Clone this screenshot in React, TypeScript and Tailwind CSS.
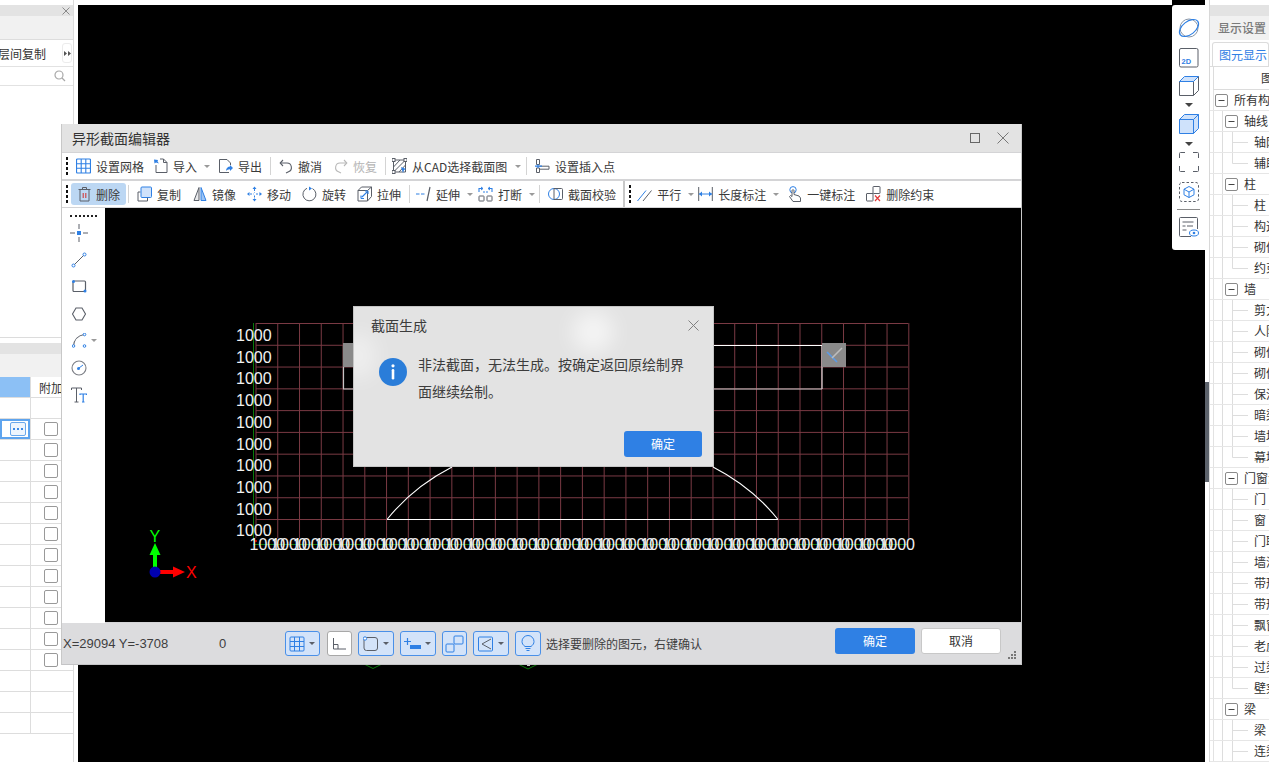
import React from "react";

const B = "#2f80e4";
const G = "#5a5f68";

function Grip({ className = "" }: { className?: string }) {
  return (
    <div className={`flex flex-col items-end gap-[2px] w-[3px] ${className}`}>
      {[0, 1, 2, 3].map((i) => (
        <div key={i} className="w-[2px] h-[3px] bg-[#111111]" />
      ))}
    </div>
  );
}

function Sep({ className = "" }: { className?: string }) {
  return <div className={`w-px h-[18px] bg-[#d4d4d4] shrink-0 ${className}`} />;
}

function Caret({ className = "" }: { className?: string }) {
  return <div className={`w-0 h-0 border-l-[3px] border-r-[3px] border-t-[3px] border-l-transparent border-r-transparent border-t-[#9a9a9a] shrink-0 ${className}`} />;
}

function Tool({ icon, label, className = "", muted = false, labelClass = "" }: { icon: React.ReactNode; label: string; className?: string; muted?: boolean; labelClass?: string }) {
  return (
    <div className={`flex items-center gap-[5px] shrink-0 ${className}`}>
      {icon}
      <span className={`mt-[2px] text-[12px] leading-[16px] whitespace-nowrap ${muted ? "text-[#b5b5b5]" : "text-[#3a3a3a]"} ${labelClass}`}>{label}</span>
    </div>
  );
}

function Ic({ w = 15, h = 16, children, className = "" }: { w?: number; h?: number; children: React.ReactNode; className?: string }) {
  return (
    <svg width={w} height={h} viewBox={`0 0 ${w} ${h}`} fill="none" strokeWidth="1" className={`shrink-0 ${className}`}>
      {children}
    </svg>
  );
}

const icons = {
  grid: (
    <Ic>
      <rect x="0.5" y="1" width="14" height="14" rx="1" stroke={B} strokeWidth="1.2" />
      <path d="M5.2 1v14M9.8 1v14M.5 5.7h14M.5 10.3h14" stroke={B} strokeWidth="1.1" />
    </Ic>
  ),
  imp: (
    <Ic>
      <path d="M3 7v7.5h11V4.5L10.5 1H7" stroke={G} />
      <path d="M10.5 1v3.5H14" stroke={G} />
      <path d="M1 1.5l4 0.5-.5 1.5 1.5 2-3-1-1.5 1z" fill={B} />
    </Ic>
  ),
  exp: (
    <Ic>
      <path d="M11 14.5H1.5v-13H9L12.5 5v2" stroke={G} />
      <path d="M8 13c0-3 2-4.500 4-4.500V7l3 3-3 3v-1.800c-2 0-3 .8-4 1.800z" fill={B} />
    </Ic>
  ),
  undo: (
    <Ic w={14}>
      <path d="M4 8 1.200 5 4 2" stroke={G} strokeWidth="1.1" />
      <path d="M1.500 5H8a4.500 4.500 0 0 1 1.500 8.700L7 15" stroke={G} strokeWidth="1.1" />
    </Ic>
  ),
  redo: (
    <Ic w={14}>
      <path d="M10 8l2.800-3L10 2" stroke="#b8b8b8" strokeWidth="1.1" />
      <path d="M12.500 5H6a4.500 4.500 0 0 0-1.500 8.700L7 15" stroke="#b8b8b8" strokeWidth="1.1" />
    </Ic>
  ),
  cad: (
    <Ic>
      <path d="M1.500 2h12v12h-12z" stroke={G} />
      <path d="M1.500 9 8 2M1.500 14 13.500 2M7 14l6.500-7" stroke={G} />
      <rect x="0" y="0.500" width="3" height="3" fill="#fff" stroke={G} />
      <rect x="12" y="0.500" width="3" height="3" fill="#fff" stroke={G} />
      <rect x="0" y="12.500" width="3" height="3" fill="#fff" stroke={G} />
      <path d="M9 9l5 2-2 1-1 3z" fill={B} />
    </Ic>
  ),
  insert: (
    <Ic>
      <path d="M1.500 1.500h3v5h-3zM1.500 10h3v4.500h-3zM4.500 8.200H14v3H4.500" stroke={G} />
      <path d="M0 8.200h7M3 6.500v3.400" stroke={B} strokeWidth="1.200" />
    </Ic>
  ),
  trash: (
    <Ic w={13}>
      <path d="M.5 3.500h12M4.500 3.500V1.500h4v2M2 3.500v11.500h9V3.500" stroke={G} />
      <path d="M5.200 7v5M7.800 7v5" stroke="#d23c3c" strokeWidth="1.100" />
    </Ic>
  ),
  copy: (
    <Ic>
      <path d="M3.500 6H1v9h9.500v-3" stroke={G} />
      <rect x="4" y="1" width="10.500" height="10.500" rx="1" fill="#cfe2fb" stroke={B} />
    </Ic>
  ),
  mirror: (
    <Ic w={14}>
      <path d="M6 1.500 1 14.500h5z" stroke={G} fill="#e9eaec" />
      <path d="M8 1.500l5 13H8z" fill="#9cc4f4" stroke={B} />
    </Ic>
  ),
  move: (
    <Ic>
      <path d="M7.500 3v3.500M7.500 9.500V13M3 8h3.500M9 8h3.500" stroke={B} strokeDasharray="2 1" />
      <path d="M7.500.5 5.500 3h4zM7.500 15.500l-2-2.500h4zM0 8l2.500-2v4zM15 8l-2.500-2v4z" fill={B} />
    </Ic>
  ),
  rotate: (
    <Ic>
      <path d="M10.500 2.600A6.500 6.500 0 1 1 5 2.300" stroke={G} />
      <path d="M7 0.500v4l3-2z" fill={B} />
    </Ic>
  ),
  stretch: (
    <Ic>
      <path d="M1 4.500h9.500V15H1zM1 4.500 4.500 1H14.500v9.500L10.500 15M10.500 4.500 14.500 1" stroke={G} />
      <path d="M5 11l5-5M4 12.500V9.500M4 12.500h3M11 5h-3M11 5v3" stroke={B} strokeWidth="1.100" />
    </Ic>
  ),
  extend: (
    <Ic>
      <path d="M0 8h3.500M5 8h3.500" stroke={B} strokeWidth="1.200" />
      <path d="M11 15 14 1" stroke={G} strokeWidth="1.200" />
    </Ic>
  ),
  brk: (
    <Ic>
      <rect x="1" y="10" width="5" height="5" stroke={G} rx="0.500" />
      <rect x="9" y="10" width="5" height="5" stroke={G} rx="0.500" />
      <path d="M1 6V2.500h3.500M14 6V2.500h-3.500" stroke={B} strokeWidth="1.100" />
      <path d="M5 6h2M8 6h2M3 1l2 1.500L3 4M12 1l-2 1.500L12 4" stroke={B} />
    </Ic>
  ),
  check: (
    <Ic>
      <circle cx="6" cy="8" r="5.500" stroke={B} />
      <path d="M6 2.500h7.500a1 1 0 0 1 1 1v9a1 1 0 0 1-1 1H6" stroke={G} />
      <path d="M6 2.500v11" stroke={G} />
    </Ic>
  ),
  parallel: (
    <Ic>
      <path d="M.5 15 9 4.500" stroke={B} />
      <path d="M6 15 14.500 4.500" stroke={G} />
    </Ic>
  ),
  length: (
    <Ic>
      <path d="M.7 1v14M14.300 1v14" stroke={G} />
      <path d="M1 8h13" stroke={B} />
      <path d="M1 8l3-2.500v5zM14 8l-3-2.500v5z" fill={B} />
    </Ic>
  ),
  hand: (
    <Ic w={14}>
      <circle cx="5" cy="3.800" r="3.200" stroke={B} />
      <path d="M4 4.500c0-1 2-1 2 0v4l5 1.500 1.500 2V15.500H5L1.500 10.500l1-1L4 10.500z" fill="#fff" stroke={G} />
    </Ic>
  ),
  delc: (
    <Ic>
      <rect x="7" y="0.500" width="7" height="7" rx="0.500" stroke={G} />
      <path d="M7 7.500H5.500" stroke={G} />
      <rect x="0.500" y="7.500" width="6.500" height="7.500" rx="0.500" stroke={G} />
      <path d="M9 9.500l5 5.500M14 9.500l-5 5.500" stroke="#e23b3b" strokeWidth="1.200" />
    </Ic>
  ),
};

function SideIcon({ children, caret = false }: { children: React.ReactNode; caret?: boolean }) {
  return (
    <div className="h-[27px] flex items-center justify-center pr-[9px] relative shrink-0">
      {children}
      {caret && <Caret className="absolute left-[29px] top-[12px]" />}
    </div>
  );
}

function StatusBtn({ children, caret = false, className = "" }: { children: React.ReactNode; caret?: boolean; className?: string }) {
  return (
    <div className={`h-[25px] flex items-center rounded-[3px] border border-[#4a90e8] bg-[#d3e3f9] shrink-0 ${className}`}>
      {children}
      {caret && <div className="ml-auto mr-[4px] w-0 h-0 border-l-[3px] border-r-[3px] border-t-[3px] border-l-transparent border-r-transparent border-t-[#5a5f68]" />}
    </div>
  );
}

function Canvas() {
  const xs = Array.from({ length: 31 }, (_, i) => 256 + i * 21.76);
  const ys = Array.from({ length: 10 }, (_, i) => 323.5 + i * 21.78);
  return (
    <svg width="916" height="414" viewBox="105 208 916 414" className="block flex-1 min-w-0 bg-black">
      {xs.map((x, i) => (
        <line key={i} x1={x} y1="323" x2={x} y2="538" stroke="#7a3a44" strokeWidth="1" />
      ))}
      {ys.map((y, i) => (
        <line key={i} x1="256" y1={y} x2="908" y2={y} stroke="#7a3a44" strokeWidth="1" />
      ))}
      <line x1="253.500" y1="323" x2="253.500" y2="541" stroke="#0a7a0a" strokeWidth="1" />
      <line x1="253" y1="544.500" x2="908" y2="544.500" stroke="#0a7a0a" strokeWidth="1" />
      <circle cx="256" cy="541" r="1" fill="#ff0000" />
      <path d="M343.500 345.500H822M822 345.500V389" stroke="#ffffff" fill="none" strokeWidth="1" />
      <path d="M343.500 345.500V389H822" stroke="#c4c4c4" fill="none" strokeWidth="1.200" />
      <path d="M387 519.500H778" stroke="#ffffff" strokeWidth="1.100" />
      <path d="M778 519.500Q752 487 713 467M387 519.500Q413 487 452 467" stroke="#ffffff" strokeWidth="1.100" fill="none" />
      <rect x="343" y="343" width="24" height="24" fill="#8a8a8a" />
      <rect x="822" y="343" width="24" height="24" fill="#8a8a8a" />
      <path d="M827 352l10 10" stroke="#5a9be8" strokeWidth="1.600" />
      <path d="M832 358l10-10" stroke="#bdbdbd" strokeWidth="1.600" />
      {ys.map((_, i) => (
        <text key={i} x="236" y={341 + i * 21.7} fontSize="16" fill="#f2f2f2" fontFamily="Liberation Sans, sans-serif">1000</text>
      ))}
      {Array.from({ length: 30 }, (_, i) => (
        <text key={i} x={249.500 + i * 21.72} y="550" fontSize="16" fill="#f2f2f2" fontFamily="Liberation Sans, sans-serif">1000</text>
      ))}
      <path d="M155 572v-18" stroke="#00ff00" strokeWidth="4" />
      <path d="M155 543l-5.500 12h11z" fill="#00ff00" />
      <path d="M155 572h20" stroke="#ff0000" strokeWidth="4" />
      <path d="M185 572l-12-5.500v11z" fill="#ff0000" />
      <circle cx="155" cy="572" r="5.500" fill="#0000b0" />
      <text x="149.500" y="542" fontSize="16" fill="#00ff00" fontFamily="Liberation Sans, sans-serif">Y</text>
      <text x="186" y="578" fontSize="16" fill="#ff0000" fontFamily="Liberation Sans, sans-serif">X</text>
    </svg>
  );
}

function Modal() {
  return (
    <div className="absolute left-[291px] top-[182px] w-[361px] h-[161px] bg-[#e3e3e3] border border-[#c6c6c6] overflow-hidden flex flex-col">
      <div className="absolute left-[218px] top-[4px] w-[42px] h-[42px] rounded-full bg-white/60 blur-[10px]" />
      <div className="absolute -left-[14px] top-[26px] w-[36px] h-[46px] rounded-full bg-white/40 blur-[10px]" />
      <div className="relative flex items-center h-[36px] pl-[17px] pr-[13px]">
        <span className="text-[14px] leading-[20px] text-[#3c3c3c]">截面生成</span>
        <svg width="13" height="13" viewBox="0 0 13 13" className="ml-auto" fill="none">
          <path d="M1.500 1.500l10 10M11.500 1.500l-10 10" stroke="#808080" strokeWidth="1" />
        </svg>
      </div>
      <div className="relative flex pl-[25px] mt-[15px]">
        <svg width="28" height="28" viewBox="0 0 28 28" className="shrink-0">
          <circle cx="14" cy="14" r="14" fill="#2a7dd9" />
          <rect x="12.700" y="11" width="2.600" height="10.500" rx="1.300" fill="#fff" />
          <circle cx="14" cy="7.800" r="1.600" fill="#fff" />
        </svg>
        <p className="ml-[11px] w-[270px] -mt-[7px] text-[14px] leading-[27px] text-[#3c3c3c]">非法截面，无法生成。按确定返回原绘制界面继续绘制。</p>
      </div>
      <div className="relative mt-auto mb-[9px] ml-auto mr-[11px] w-[78px] h-[26px] rounded-[3px] bg-[#2f80e4] flex items-center justify-center text-[12px] text-white">确定</div>
    </div>
  );
}

function Dialog() {
  return (
    <div className="absolute left-[61px] top-[124px] w-[961px] h-[541px] bg-[#d4d4d6] border-l-[1px] border-r-[1px] border-[#c8c8c8] flex flex-col font-['Noto_Sans_CJK_SC','Liberation_Sans',sans-serif]">
      <div className="h-[28px] shrink-0 bg-[#e3e3e3] flex items-center pl-[10px] pr-[11px]">
        <span className="text-[14px] text-[#333333]">异形截面编辑器</span>
        <svg width="12" height="12" viewBox="0 0 12 12" fill="none" className="ml-auto">
          <rect x="1.500" y="1.500" width="9" height="9" stroke="#666666" />
        </svg>
        <svg width="14" height="14" viewBox="0 0 14 14" fill="none" className="ml-[15px]">
          <path d="M1.500 1.500l11 11M12.500 1.500l-11 11" stroke="#777777" />
        </svg>
      </div>
      <div className="h-[26px] mt-px shrink-0 bg-white flex items-center">
        <Grip className="ml-[3px]" />
        <Tool className="ml-[8px]" icon={icons.grid} label="设置网格" />
        <Tool className="ml-[9px]" icon={icons.imp} label="导入" />
        <Caret className="ml-[7px]" />
        <Tool className="ml-[8px]" icon={icons.exp} label="导出" />
        <Sep className="ml-[8px]" />
        <Tool className="ml-[8px]" icon={icons.undo} label="撤消" />
        <Tool className="ml-[12px]" icon={icons.redo} label="恢复" muted />
        <Sep className="ml-[8px]" />
        <Tool className="ml-[6px]" icon={icons.cad} label="从CAD选择截面图" labelClass="w-[97px]" />
        <Caret className="ml-[6px]" />
        <Sep className="ml-[5px]" />
        <Tool className="ml-[8px]" icon={icons.insert} label="设置插入点" />
      </div>
      <div className="h-[26px] mt-[2px] shrink-0 bg-white flex items-center">
        <Grip className="ml-[3px]" />
        <div className="ml-[3px] w-[55px] h-[22px] rounded-[3px] bg-[#bcd7f3] flex items-center pl-[7px] shrink-0">
          <Tool icon={icons.trash} label="删除" />
        </div>
        <Sep className="ml-[2px]" />
        <Tool className="ml-[8px]" icon={icons.copy} label="复制" />
        <Tool className="ml-[12px]" icon={icons.mirror} label="镜像" />
        <Tool className="ml-[11px]" icon={icons.move} label="移动" />
        <Tool className="ml-[11px]" icon={icons.rotate} label="旋转" />
        <Tool className="ml-[11px]" icon={icons.stretch} label="拉伸" />
        <Sep className="ml-[8px]" />
        <Tool className="ml-[6px]" icon={icons.extend} label="延伸" />
        <Caret className="ml-[7px]" />
        <Tool className="ml-[5px]" icon={icons.brk} label="打断" />
        <Caret className="ml-[7px]" />
        <Sep className="ml-[4px]" />
        <Tool className="ml-[8px]" icon={icons.check} label="截面校验" />
        <div className="ml-[7px] w-[2px] h-full bg-[#c8c8c8] shrink-0" />
        <Grip className="ml-[3px]" />
        <Tool className="ml-[6px]" icon={icons.parallel} label="平行" />
        <Caret className="ml-[7px]" />
        <Tool className="ml-[4px]" icon={icons.length} label="长度标注" />
        <Caret className="ml-[7px]" />
        <Tool className="ml-[9px]" icon={icons.hand} label="一键标注" />
        <Tool className="ml-[11px]" icon={icons.delc} label="删除约束" />
      </div>
      <div className="h-[415px] mt-px shrink-0 flex">
        <div className="w-[43px] shrink-0 bg-white flex flex-col pt-[7px]">
          <div className="h-[2px] w-[27px] ml-[8px] border-t-2 border-dotted border-[#222222]" />
          <div className="flex flex-col mt-[2px]">
            <SideIcon>
              <svg width="18" height="18" viewBox="0 0 18 18" fill="none">
                <path d="M0 9h5M13 9h5M9 0v5M9 13v5" stroke={G} />
                <rect x="7" y="7" width="4" height="4" fill={B} />
              </svg>
            </SideIcon>
            <SideIcon>
              <svg width="16" height="16" viewBox="0 0 16 16" fill="none">
                <path d="M2.500 13.500 13.500 2.500" stroke={G} />
                <circle cx="2.500" cy="13.500" r="1.500" fill="#fff" stroke={B} />
                <circle cx="13.500" cy="2.500" r="1.500" fill="#fff" stroke={B} />
              </svg>
            </SideIcon>
            <SideIcon>
              <svg width="15" height="13" viewBox="0 0 15 13" fill="none">
                <rect x="1" y="1" width="12.500" height="10.500" rx="1" stroke={G} strokeWidth="1.200" />
                <circle cx="1.500" cy="1.500" r="1.500" fill={B} />
                <circle cx="13" cy="11" r="1.500" fill={B} />
              </svg>
            </SideIcon>
            <SideIcon>
              <svg width="14" height="14" viewBox="0 0 14 14" fill="none">
                <path d="M4 1h6l3.500 6-3.500 6H4L.5 7z" stroke={G} strokeWidth="1.100" />
              </svg>
            </SideIcon>
            <SideIcon caret>
              <svg width="15" height="15" viewBox="0 0 15 15" fill="none">
                <path d="M1.500 13C2 7 6 2.500 12 1.500" stroke={G} strokeWidth="1.100" />
                <circle cx="1.500" cy="13" r="1.300" fill="#fff" stroke={B} />
                <circle cx="12.500" cy="1.500" r="1.300" fill="#fff" stroke={B} />
                <circle cx="12.500" cy="13" r="1.300" fill="#fff" stroke={B} />
              </svg>
            </SideIcon>
            <SideIcon>
              <svg width="16" height="16" viewBox="0 0 16 16" fill="none">
                <circle cx="8" cy="8" r="7" stroke="#7c7f86" strokeWidth="1.100" />
                <path d="M8 8l4-3" stroke={B} />
                <circle cx="7.500" cy="8.500" r="1.500" fill={B} />
              </svg>
            </SideIcon>
            <SideIcon>
              <svg width="16" height="16" viewBox="0 0 16 16" fill="none">
                <path d="M.5 3V1h10v2M5.500 1v14M3.500 15h4" stroke={G} />
                <path d="M9 8V7h6.500v1M12.200 7v8M11 15h2.500" stroke={B} strokeWidth="1.200" />
              </svg>
            </SideIcon>
          </div>
        </div>
        <Canvas />
      </div>
      <div className="relative flex-1 flex items-center bg-[#dcdcde] border-b border-[#c4c4c6]">
        <span className="ml-[1px] w-[105px] shrink-0 text-[13px] font-['Liberation_Sans',sans-serif] text-[#3e3e3e] whitespace-nowrap">X=29094 Y=-3708</span>
        <span className="ml-[51px] w-[7px] shrink-0 text-[13px] font-['Liberation_Sans',sans-serif] text-[#3e3e3e]">0</span>
        <StatusBtn className="ml-[59px] w-[35px] pl-[3px]" caret>
          <svg width="16" height="16" viewBox="0 0 16 16" fill="none">
            <rect x="1" y="1" width="14" height="14" rx="1" stroke={B} />
            <path d="M5.500 1v14M10.500 1v14M1 5.500h14M1 10.500h14" stroke={B} />
          </svg>
        </StatusBtn>
        <div className="ml-[7px] w-[25px] h-[25px] bg-white border border-[#a8a8a8] rounded-[3px] flex items-center justify-center shrink-0">
          <svg width="15" height="15" viewBox="0 0 15 15" fill="none">
            <path d="M1.500 2v11H14M1.500 8.500H6v4.500" stroke={G} />
          </svg>
        </div>
        <StatusBtn className="ml-[6px] w-[36px] pl-[4px]" caret>
          <svg width="16" height="16" viewBox="0 0 16 16" fill="none">
            <rect x="1" y="1.500" width="13.500" height="13" rx="2.500" stroke={G} />
            <circle cx="2" cy="2.500" r="1.700" fill="#fff" stroke={B} />
          </svg>
        </StatusBtn>
        <StatusBtn className="ml-[6px] w-[36px] pl-[3px]" caret>
          <svg width="18" height="16" viewBox="0 0 18 16" fill="none">
            <path d="M0 5.500h7M3.500 2v7" stroke={B} strokeWidth="1.200" />
            <rect x="6" y="9" width="11" height="4" fill={B} />
          </svg>
        </StatusBtn>
        <StatusBtn className="ml-[6px] w-[25px] justify-center">
          <svg width="19" height="18" viewBox="0 0 19 18" fill="none">
            <rect x="9" y="1" width="9" height="8" rx="1" stroke={B} />
            <rect x="1" y="9" width="8" height="8" rx="1" stroke={B} />
          </svg>
        </StatusBtn>
        <StatusBtn className="ml-[6px] w-[36px] pl-[4px]" caret>
          <svg width="15" height="16" viewBox="0 0 15 16" fill="none">
            <rect x="0.500" y="1" width="14" height="14" rx="1" stroke={B} />
            <path d="M13 3 4 8l9 5" stroke={G} />
          </svg>
        </StatusBtn>
        <StatusBtn className="ml-[6px] w-[26px] justify-center">
          <svg width="14" height="17" viewBox="0 0 14 17" fill="none">
            <path d="M4 11.500C2 10 1 8.500 1 6.500a6 6 0 0 1 12 0c0 2-1 3.500-3 5z" stroke={B} />
            <path d="M4.500 13.500h5M5.500 15.500h3" stroke={B} />
          </svg>
        </StatusBtn>
        <span className="ml-[5px] w-[156px] shrink-0 text-[12px] text-[#3e3e3e] whitespace-nowrap">选择要删除的图元，右键确认</span>
        <div className="ml-[133px] -mt-[5px] w-[80px] h-[26px] rounded-[3px] bg-[#2f80e4] flex items-center justify-center text-[12px] text-white shrink-0">确定</div>
        <div className="ml-[6px] -mt-[5px] w-[80px] h-[26px] rounded-[3px] bg-white border border-[#c8c8c8] flex items-center justify-center text-[12px] text-[#333333] shrink-0">取消</div>
        <svg width="9" height="9" viewBox="0 0 9 9" className="absolute right-[4px] bottom-[4px]" fill="#777777">
          <rect x="6" y="0" width="2" height="2" />
          <rect x="3" y="3" width="2" height="2" />
          <rect x="6" y="3" width="2" height="2" />
          <rect x="0" y="6" width="2" height="2" />
          <rect x="3" y="6" width="2" height="2" />
          <rect x="6" y="6" width="2" height="2" />
        </svg>
      </div>
      <Modal />
    </div>
  );
}

function LeftPanel() {
  return (
    <div className="w-[78px] shrink-0 h-full bg-white flex flex-col font-['Noto_Sans_CJK_SC',sans-serif]">
      <div className="w-[74px] h-full pt-[5px] border-r border-[#dcdcdc] flex flex-col">
        <div className="h-[11px] bg-[#e3e3e3] flex items-center justify-end pr-[3px] shrink-0">
          <svg width="8" height="8" viewBox="0 0 8 8" fill="none">
            <path d="M.5.500l7 7M7.500.500l-7 7" stroke="#8a8a8a" />
          </svg>
        </div>
        <div className="h-[24px] bg-[#f1f1f1] border-b border-[#dddddd] shrink-0" />
        <div className="h-[27px] flex items-center border-b border-[#e2e2e2] shrink-0 overflow-hidden">
          <span className="-ml-[2px] mt-[1px] text-[12px] text-[#333333] whitespace-nowrap w-[64px]">层间复制</span>
          <div className="w-[10px] h-[20px] rounded-[3px] border border-[#ececec] flex items-center justify-center shrink-0">
            <svg width="7" height="5" viewBox="0 0 7 5" fill="#555555">
              <path d="M0 0l3 2.500L0 5zM4 0l3 2.500L4 5z" />
            </svg>
          </div>
        </div>
        <div className="h-[19px] flex items-center justify-end pr-[7px] border-b border-[#e2e2e2] shrink-0">
          <svg width="12" height="12" viewBox="0 0 12 12" fill="none">
            <circle cx="5" cy="5" r="4" stroke="#a8a8a8" strokeWidth="1.200" />
            <path d="M8 8l3 3" stroke="#a8a8a8" strokeWidth="1.300" />
          </svg>
        </div>
        <div className="h-[252px] border-b border-[#dcdcdc] shrink-0" />
        <div className="h-[5px] shrink-0" />
        <div className="h-[11px] bg-[#e3e3e3] shrink-0" />
        <div className="h-[23px] bg-[#f1f1f1] shrink-0" />
        <div className="flex h-[21px] shrink-0 border-b border-[#dddddd]">
          <div className="w-[30px] bg-[#8cc0f5]" />
          <div className="flex-1 pl-[8px] border-l border-[#dddddd] text-[12px] leading-[21px] text-[#333333] whitespace-nowrap overflow-hidden">附加</div>
        </div>
        {Array.from({ length: 16 }, (_, i) => (
          <div key={i} className="flex h-[21px] shrink-0 border-b border-[#dddddd]">
            <div className={`w-[30px] flex items-center justify-end ${i === 1 ? "border-2 border-[#5ea4ee] pr-[2px]" : ""}`}>
              {i === 1 && (
                <div className="w-[16px] h-[14px] border border-[#6aa8ec] rounded-[2px] bg-[#eef5fd] flex items-center justify-center gap-[2px]">
                  {[0, 1, 2].map((d) => (
                    <div key={d} className="w-[2px] h-[2px] bg-[#3d8ae6]" />
                  ))}
                </div>
              )}
            </div>
            <div className="flex-1 border-l border-[#dddddd] flex items-center pl-[13px]">
              {i >= 1 && i <= 12 && <div className="w-[14px] h-[14px] border border-[#999999] rounded-[2px] bg-white" />}
            </div>
          </div>
        ))}
      </div>
    </div>
  );
}

function RightTools() {
  return (
    <div className="w-[33px] h-full shrink-0 bg-black pt-[5px]">
      <div className="h-[245px] bg-white rounded-l-[3px] flex flex-col items-center pt-[11px]">
        <svg width="24" height="24" viewBox="0 0 24 24" fill="none" className="shrink-0">
          <circle cx="12" cy="12" r="9" stroke="#8a96a6" />
          <ellipse cx="12" cy="12" rx="11" ry="6.500" transform="rotate(-38 12 12)" stroke={B} strokeWidth="1.200" />
        </svg>
        <svg width="20" height="20" viewBox="0 0 20 20" fill="none" className="mt-[8px] shrink-0">
          <rect x="0.500" y="0.500" width="18.500" height="18.500" rx="1.500" stroke={G} />
          <text x="2.500" y="16" fontSize="7.500" fontWeight="700" fill={B} fontFamily="Liberation Sans, sans-serif">2D</text>
        </svg>
        <svg width="20" height="20" viewBox="0 0 20 20" fill="none" className="mt-[8px] shrink-0">
          <path d="M.5 5.500h14V19.500H.5z" stroke={G} />
          <path d="M14.500 5.500 19.500.5V14.500l-5 5" stroke={G} />
          <path d="M.5 5.500 5.500.5h14l-5 5z" fill="#cfe2fb" stroke={B} />
        </svg>
        <Caret className="mt-[7px] !border-t-[#444444] !border-l-[4px] !border-r-[4px] !border-t-[4px]" />
        <svg width="20" height="20" viewBox="0 0 20 20" fill="none" className="mt-[7px] shrink-0">
          <path d="M.5 5.500h14V19.500H.5z" fill="#cfe2fb" stroke={B} />
          <path d="M14.500 5.500 19.500.5V14.500l-5 5z" fill="#cfe2fb" stroke={B} />
          <path d="M.5 5.500 5.500.5h14l-5 5z" fill="#cfe2fb" stroke={B} />
        </svg>
        <Caret className="mt-[8px] !border-t-[#444444] !border-l-[4px] !border-r-[4px] !border-t-[4px]" />
        <svg width="20" height="20" viewBox="0 0 20 20" fill="none" className="mt-[6px] shrink-0">
          <path d="M.5 6V1.500a1 1 0 0 1 1-1H6M14 .5h4.500a1 1 0 0 1 1 1V6M.5 14v4.500a1 1 0 0 0 1 1H6M14 19.500h4.500a1 1 0 0 0 1-1V14" stroke={G} />
        </svg>
        <svg width="20" height="20" viewBox="0 0 20 20" fill="none" className="mt-[10px] shrink-0">
          <rect x="0.500" y="0.500" width="19" height="19" rx="2.500" stroke={G} strokeDasharray="2.500 2" />
          <path d="M10 4.500 15 7.200v5.600L10 15.500 5 12.800V7.200zM5 7.200l5 2.800 5-2.800M10 10v5.500" stroke={B} />
        </svg>
        <div className="w-[23px] h-px bg-[#8a8a8a] mt-[7px] shrink-0" />
        <svg width="20" height="20" viewBox="0 0 20 20" fill="none" className="mt-[7px] shrink-0">
          <path d="M12 19.500H1.500a1 1 0 0 1-1-1V1.500a1 1 0 0 1 1-1h16a1 1 0 0 1 1 1V12" stroke={G} />
          <path d="M3.500 5h11M3.500 9h3M8 9h6M3.500 13h4" stroke={G} />
          <ellipse cx="15" cy="16" rx="4.500" ry="3" fill="#fff" stroke={B} />
          <circle cx="15" cy="16" r="1.300" fill={B} />
        </svg>
      </div>
    </div>
  );
}

const tree: [number, string, boolean?][] = [
  [0, "所有构件"], [1, "轴线"], [2, "轴网"], [2, "辅助轴线", true],
  [1, "柱"], [2, "柱"], [2, "构造柱"], [2, "砌体柱"], [2, "约束边缘", true],
  [1, "墙"], [2, "剪力墙"], [2, "人防门框墙"], [2, "砌体墙"], [2, "砌体加筋"], [2, "保温墙"], [2, "暗梁"], [2, "墙垛"], [2, "幕墙", true],
  [1, "门窗洞"], [2, "门"], [2, "窗"], [2, "门联窗"], [2, "墙洞"], [2, "带形窗"], [2, "带形洞"], [2, "飘窗"], [2, "老虎窗"], [2, "过梁"], [2, "壁龛", true],
  [1, "梁"], [2, "梁"], [2, "连梁"],
];

function TreeRow({ level, label, last }: { level: number; label: string; last?: boolean }) {
  const gutter = level === 0 ? 24 : level === 1 ? 34 : 44;
  const bx = level === 0 ? 5 : 15;
  return (
    <div className="h-[21px] shrink-0 flex items-center border-b border-[#e6e6e6] overflow-hidden">
      <svg width={gutter} height="21" viewBox={`0 0 ${gutter} 21`} fill="none" className="shrink-0">
        <path d="M3.500 0v21" stroke="#e2e2e2" />
        {level > 0 && <path d="M12.500 0v21" stroke="#dddddd" />}
        {level === 2 && <path d={last ? "M22.500 0v10.500H38" : "M22.500 0v21M22.500 10.500H38"} stroke="#dddddd" />}
        {level < 2 && (
          <>
            <rect x={bx + 0.5} y="4.500" width="12" height="12" rx="1.500" fill="#fff" stroke="#8a8a8a" />
            <path d={`M${bx + 3.5} 10.500h6`} stroke="#444444" />
          </>
        )}
      </svg>
      <span className="text-[12px] text-[#333333] whitespace-nowrap">{label}</span>
    </div>
  );
}

function RightPanel() {
  return (
    <div className="w-[64px] shrink-0 h-full bg-white flex font-['Noto_Sans_CJK_SC',sans-serif]">
      <div className="w-[5px] shrink-0 pt-[382px] border-r border-[#d8d8d8]">
        <div className="w-[4px] h-[100px] bg-[#5c626b]" />
      </div>
      <div className="flex-1 min-w-0 pt-[5px] flex flex-col overflow-hidden">
        <div className="h-[11px] bg-[#e3e3e3] shrink-0" />
        <div className="h-[24px] bg-[#f1f1f1] shrink-0 pl-[8px] flex items-center">
          <span className="text-[12px] font-medium text-[#7a7a7a] whitespace-nowrap">显示设置</span>
        </div>
        <div className="h-[27px] shrink-0 pl-[2px] pt-[2px] flex border-b border-[#dcdcdc]">
          <div className="flex-1 border border-b-0 border-[#dcdcdc] rounded-t-[3px] pl-[6px] text-[12px] leading-[24px] text-[#2f80e4] whitespace-nowrap overflow-hidden">图元显示</div>
        </div>
        <div className="h-[23px] shrink-0 flex items-center pl-[47px] border-b border-[#dcdcdc] border-l ml-[3px] text-[12px] text-[#333333] overflow-hidden whitespace-nowrap">图</div>
        {tree.map(([l, t, last], i) => (
          <TreeRow key={i} level={l} label={t} last={last} />
        ))}
      </div>
    </div>
  );
}

export default function App() {
  return (
    <div className="relative w-[1269px] h-[762px] overflow-hidden bg-white flex">
      <LeftPanel />
      <div className="relative flex-1 min-w-0 h-full pt-[5px]">
        <div className="h-full bg-black" />
        <svg width="200" height="8" viewBox="0 0 200 8" fill="none" className="absolute left-[285px] top-[664px]">
          <path d="M1 0l9 4.500L19 0" stroke="#0a7a0a" />
          <path d="M155 0l10 5 10-5" stroke="#0a7a0a" />
          <rect x="164" y="0" width="3" height="2" fill="#cccccc" />
        </svg>
      </div>
      <RightTools />
      <RightPanel />
      <Dialog />
    </div>
  );
}
